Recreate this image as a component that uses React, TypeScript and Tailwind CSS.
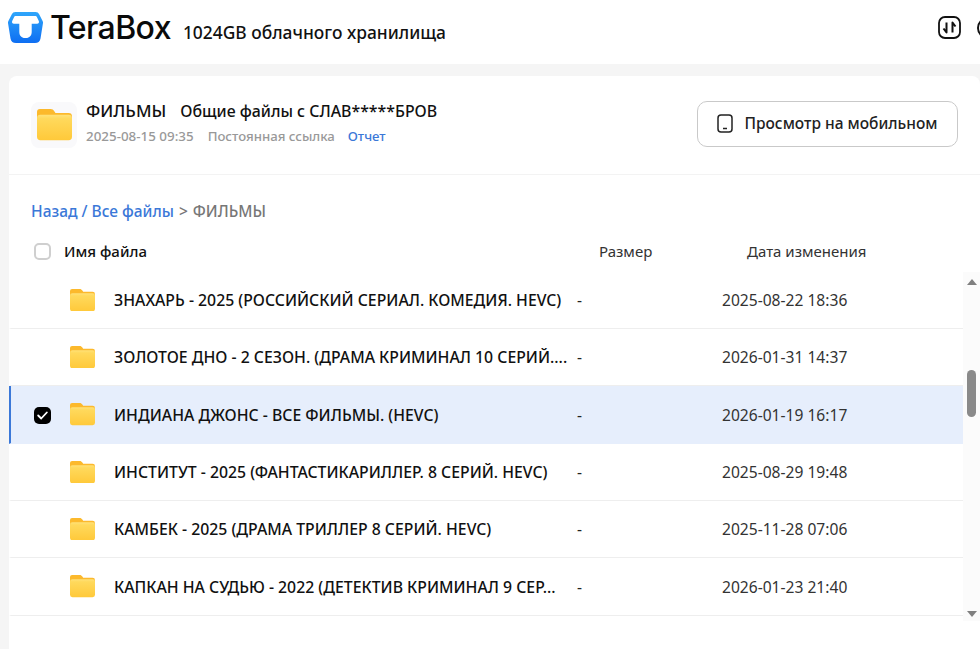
const rows = [
  { name: 'ЗНАХАРЬ - 2025 (РОССИЙСКИЙ СЕРИАЛ. КОМЕДИЯ. HEVC)', date: '2025-08-22 18:36' },
  { name: 'ЗОЛОТОЕ ДНО - 2 СЕЗОН. (ДРАМА КРИМИНАЛ 10 СЕРИЙ....', date: '2026-01-31 14:37' },
  { name: 'ИНДИАНА ДЖОНС - ВСЕ ФИЛЬМЫ. (HEVC)', date: '2026-01-19 16:17', selected: true },
  { name: 'ИНСТИТУТ - 2025 (ФАНТАСТИКАРИЛЛЕР. 8 СЕРИЙ. HEVC)', date: '2025-08-29 19:48' },
  { name: 'КАМБЕК - 2025 (ДРАМА ТРИЛЛЕР 8 СЕРИЙ. HEVC)', date: '2025-11-28 07:06' },
  { name: 'КАПКАН НА СУДЬЮ - 2022 (ДЕТЕКТИВ КРИМИНАЛ 9 СЕР...', date: '2026-01-23 21:40' },
]

function FolderIcon({ size, className }: { size: number; className?: string }) {
  return (
    <svg width={size} height={size * 0.89} viewBox="0 0 36 32" className={`shrink-0 ${className ?? ''}`}>
      <path d="M3 0h11c1.800 0 2.800.8 3.800 2.200L19 4h13.500A3.500 3.500 0 0 1 36 7.500V14H0V3a3 3 0 0 1 3-3z" fill="#fcb92c" />
      <rect x="0" y="6" width="36" height="26" rx="3.500" fill="url(#folder-body)" />
    </svg>
  )
}

function Logo() {
  return (
    <svg width="35" height="31" viewBox="0 0 35 31" className="shrink-0">
      <defs>
        <linearGradient id="logo-blue" x1="0" y1="0" x2="0" y2="1">
          <stop offset="0" stopColor="#2fa6fb" />
          <stop offset="1" stopColor="#0e6ef2" />
        </linearGradient>
      </defs>
      <path d="M7.500 0h20c1.800 0 3 .8 3.800 2.500L34.600 9c.5 1.200.5 2 .2 3.200L32.500 26.500C32 29.500 30 31 27 31H8c-3 0-5-1.500-5.500-4.500L.2 12.200C-.1 11 -.1 10.200.4 9L3.700 2.500C4.500.8 5.700 0 7.500 0z" fill="url(#logo-blue)" />
      <path d="M8 4h19c1 0 1.700.5 2.100 1.400l1.700 3.600c.6 1.500-.2 2.800-1.800 2.800h-5.300V20c0 3.600-2.200 6-5.700 6h-1c-3.500 0-5.700-2.400-5.700-6v-8.200H6c-1.600 0-2.400-1.300-1.800-2.800l1.700-3.600C6.300 4.500 7 4 8 4z" fill="#fff" />
    </svg>
  )
}

function Row({ name, date, selected }: { name: string; date: string; selected?: boolean }) {
  return (
    <div
      className={`flex h-[57.33px] shrink-0 items-center border-b border-l-2 pt-[2px] ${
        selected ? 'border-b-[#e6eefc] border-l-[#3b78d8] bg-[#e6eefc]' : 'border-b-[#eeeeee] border-l-transparent'
      }`}
    >
      <div className="flex w-[59px] shrink-0 justify-center pl-[4px]">
        {selected && (
          <span className="flex h-[17px] w-[17px] items-center justify-center rounded-[5px] bg-black">
            <svg width="11" height="9" viewBox="0 0 11 9" fill="none">
              <path d="M1.200 4.500 4.200 7.500 9.800 1.500" stroke="#fff" strokeWidth="1.800" strokeLinecap="round" strokeLinejoin="round" />
            </svg>
          </span>
        )}
      </div>
      <FolderIcon size={25} className="mb-[2px]" />
      <div className="ml-[19px] w-[450px] shrink-0 whitespace-nowrap text-[15.800px] font-medium text-[#111]">{name}</div>
      <div className="ml-[13px] w-[145px] shrink-0 text-[15.600px] text-[#222]">-</div>
      <div className="text-[15.600px] text-[#333]">{date}</div>
    </div>
  )
}

export default function App() {
  return (
    <div className="h-[649px] w-[980px] overflow-hidden bg-[#f5f5f5] font-['Noto_Sans',sans-serif]">
      <svg width="0" height="0" className="absolute">
        <defs>
          <linearGradient id="folder-body" x1="0" y1="0" x2="0" y2="1">
            <stop offset="0" stopColor="#ffe27a" />
            <stop offset="0.15" stopColor="#ffd95c" />
            <stop offset="1" stopColor="#ffc93a" />
          </linearGradient>
        </defs>
      </svg>

      <header className="flex h-16 items-center overflow-hidden bg-white pb-[9px] pl-[8px]">
        <Logo />
        <span className="mt-[1px] ml-[7px] font-['Inter',sans-serif] text-[32px] leading-none font-medium tracking-[-0.6px] text-[#0a0a0a]">TeraBox</span>
        <span className="mt-[9px] ml-[12px] text-[17.400px] font-medium text-[#111]">1024GB облачного хранилища</span>
        <svg width="23" height="23" viewBox="0 0 23 23" fill="none" className="ml-auto shrink-0">
          <rect x="1" y="1" width="21" height="21" rx="6" stroke="#111" strokeWidth="1.800" />
          <path d="M8.500 6.500v10L5.500 12.500M14.500 16.500v-10L17.500 10.500" stroke="#111" strokeWidth="2" strokeLinejoin="round" />
        </svg>
        <span className="mr-[-19px] ml-[16px] h-[22px] w-[22px] shrink-0 rounded-full border-2 border-[#111]" />
      </header>

      <main className="mt-3 ml-[9px] h-[573px] overflow-hidden rounded-t-lg bg-white">
        <section className="flex h-[99px] items-center justify-between border-b border-[#f3f3f3] px-[22px]">
          <div className="flex items-center">
            <div className="flex h-[46px] w-[46px] items-center justify-center rounded-lg bg-[#f9f9fb]">
              <FolderIcon size={35} />
            </div>
            <div className="mb-[5px] ml-[9px]">
              <div className="text-[15.900px] leading-[24px] font-medium text-[#111]">
                <span className="text-[17px]">ФИЛЬМЫ</span>
                <span className="ml-[14px]">Общие файлы с СЛАВ*****БРОВ</span>
              </div>
              <div className="mt-[3px] flex text-[13.200px] leading-[20px] font-medium text-[#999]">
                <span className="text-[13.400px]">2025-08-15 09:35</span>
                <span className="ml-[14px]">Постоянная ссылка</span>
                <span className="ml-[13px] text-[#3b78d8]">Отчет</span>
              </div>
            </div>
          </div>
          <button className="mb-[3px] flex h-[46px] w-[261px] items-center justify-center rounded-[10px] border border-[#c9c9c9] text-[15.500px] font-medium text-[#222]">
            <svg width="16" height="19" viewBox="0 0 16 19" fill="none" className="mr-[11px]">
              <rect x="1" y="1" width="14" height="17" rx="3" stroke="#222" strokeWidth="1.500" />
              <path d="M6 14.500h4" stroke="#222" strokeWidth="1.500" />
            </svg>
            Просмотр на мобильном
          </button>
        </section>

        <div className="mt-[25px] pl-[22px] text-[15.500px] leading-[22px] font-medium">
          <span className="text-[#3b78d8]">Назад / Все файлы</span>
          <span className="ml-[5px] text-[#777]">&gt;</span>
          <span className="ml-[5px] text-[#777]">ФИЛЬМЫ</span>
        </div>

        <div className="mt-[17px] flex h-[24px] items-center text-[15px]">
          <span className="ml-[25px] h-[17px] w-[17px] rounded-[5px] border-2 border-[#cfcfcf]" />
          <span className="ml-[13px] w-[535px] font-medium text-[#111]">Имя файла</span>
          <span className="w-[148px] text-[#333]">Размер</span>
          <span className="text-[#333]">Дата изменения</span>
        </div>

        <div className="mt-[9px] flex h-[349px]">
          <div className="-mt-[0.4px] flex min-w-0 flex-1 flex-col overflow-hidden">
            {rows.map((row) => (
              <Row key={row.name} {...row} />
            ))}
          </div>
          <div className="flex w-[17px] shrink-0 flex-col items-center bg-[#fbfbfb] pt-[7px]">
            <span className="h-0 w-0 border-x-[5.500px] border-b-[6px] border-x-transparent border-b-[#808080]" />
            <span className="mt-[85px] h-[47px] w-[9px] rounded-full bg-[#8a8a8a]" />
            <span className="mt-auto mb-[4px] h-0 w-0 border-x-[5.500px] border-t-[6px] border-x-transparent border-t-[#808080]" />
          </div>
        </div>
      </main>
    </div>
  )
}
